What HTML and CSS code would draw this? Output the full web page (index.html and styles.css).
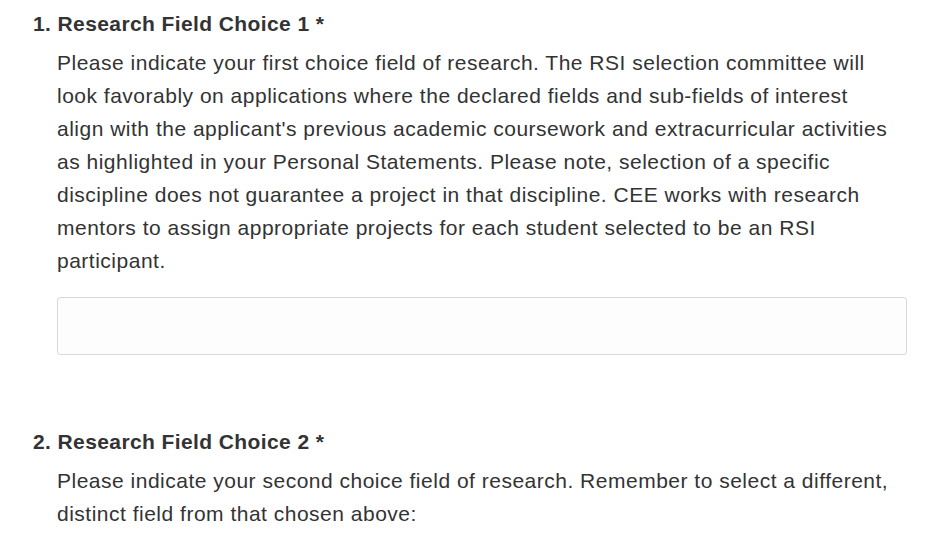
FILE: index.html
```html
<!DOCTYPE html>
<html>
<head>
<meta charset="utf-8">
<link rel="stylesheet" href="styles.css">
</head>
<body>
<div class="form">
  <div class="question">
    <div class="q-title">1. Research Field Choice 1 <span class="req">*</span></div>
    <div class="q-body">
      <p class="q-desc">Please indicate your first choice field of research. The RSI selection committee will look favorably on applications where the declared fields and sub-fields of interest align with the applicant's previous academic coursework and extracurricular activities as highlighted in your Personal Statements. Please note, selection of a specific discipline does not guarantee a project in that discipline. CEE works with research mentors to assign appropriate projects for each student selected to be an RSI participant.</p>
      <input class="q-input" type="text">
    </div>
  </div>
  <div class="question">
    <div class="q-title">2. Research Field Choice 2 <span class="req">*</span></div>
    <div class="q-body">
      <p class="q-desc">Please indicate your second choice field of research. Remember to select a different, distinct field from that chosen above:</p>
    </div>
  </div>
</div>
</body>
</html>
```
FILE: styles.css
```css
html, body {
  margin: 0;
  padding: 0;
  background: #ffffff;
}
body {
  font-family: "Liberation Sans", Arial, sans-serif;
  color: #333333;
}
.form {
  padding: 12px 0 0 33px;
}
.question {
  margin-bottom: 75px;
}
.question:last-child {
  margin-bottom: 0;
}
.q-title {
  font-size: 21px;
  font-weight: bold;
  line-height: 24px;
  letter-spacing: 0.4px;
}
.q-body {
  margin-left: 24px;
  width: 850px;
}
.q-desc {
  margin: 10px 0 0 0;
  width: 838px;
  font-size: 21px;
  line-height: 33px;
  letter-spacing: 0.5px;
}
.q-input {
  display: block;
  box-sizing: border-box;
  width: 850px;
  height: 58px;
  margin-top: 20px;
  border: 1px solid #d6d8dc;
  border-radius: 3px;
  background: #fdfdfe;
  outline: none;
}
```
